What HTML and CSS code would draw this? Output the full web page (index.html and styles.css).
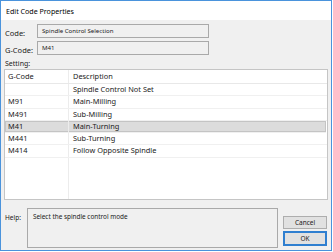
FILE: index.html
```html
<!DOCTYPE html>
<html>
<head>
<meta charset="utf-8">
<link rel="stylesheet" href="styles.css">
</head>
<body>
<div class="window">
  <div class="titlebar">Edit Code Properties</div>
  <div class="content">
    <div class="field-row">
      <span class="label">Code:</span>
      <div class="field">Spindle Control Selection</div>
    </div>
    <div class="field-row">
      <span class="label">G-Code:</span>
      <div class="field">M41</div>
    </div>
    <div class="setting-label">Setting:</div>
    <div class="list">
      <div class="row header"><div class="c1">G-Code</div><div class="c2">Description</div></div>
      <div class="row"><div class="c1"></div><div class="c2">Spindle Control Not Set</div></div>
      <div class="row"><div class="c1">M91</div><div class="c2">Main-Milling</div></div>
      <div class="row"><div class="c1">M491</div><div class="c2">Sub-Milling</div></div>
      <div class="row selected"><div class="c1">M41</div><div class="c2">Main-Turning</div></div>
      <div class="row"><div class="c1">M441</div><div class="c2">Sub-Turning</div></div>
      <div class="row"><div class="c1">M414</div><div class="c2">Follow Opposite Spindle</div></div>
      <div class="row filler"><div class="c1"></div><div class="c2"></div></div>
    </div>
    <div class="bottom">
      <span class="help-label">Help:</span>
      <div class="help">Select the spindle control mode</div>
      <div class="buttons">
        <div class="btn">Cancel</div>
        <div class="btn default">OK</div>
      </div>
    </div>
  </div>
</div>
</body>
</html>
```
FILE: styles.css
```css
* { box-sizing: border-box; }
html, body { margin: 0; padding: 0; background: #ffffff; }
body {
  font-family: "Noto Sans", "Open Sans", sans-serif;
  font-size: 7.5px;
  color: #1a1a1a;
}
.window {
  width: 332px;
  height: 251px;
  border: 1px solid #4a93dc;
  background: #f0f0f0;
  display: flex;
  flex-direction: column;
}
.titlebar {
  height: 19px;
  background: #ffffff;
  padding-left: 5px;
  display: flex;
  align-items: center;
  font-size: 7.1px;
  color: #000;
}
.content {
  flex: 1;
  display: flex;
  flex-direction: column;
  padding: 4px 4px 0 3px;
}
.field-row {
  display: flex;
  align-items: center;
  height: 14px;
  margin-bottom: 3px;
}
.label {
  width: 33px;
  padding-left: 1px;
  padding-top: 3px;
}
.field {
  width: 172px;
  height: 14px;
  border: 1px solid #a9a9a9;
  background: #f0f0f0;
  padding-left: 4px;
  line-height: 11px;
  font-size: 6.1px;
}
.setting-label {
  height: 10px;
  line-height: 10px;
  padding-left: 1px;
  margin-top: 1px;
  font-size: 7px;
}
.list {
  width: 324px;
  height: 131px;
  border: 1px solid #c5c5c5;
  background: #ffffff;
  display: flex;
  flex-direction: column;
  font-size: 7.4px;
}
.row {
  display: flex;
  height: 12.3px;
  border-bottom: 1px solid #f0f0f0;
  line-height: 11px;
}
.row.header {
  height: 14px;
  line-height: 13px;
  border-bottom: 1px solid #e8e8e8;
}
.row.selected {
  background: #dcdcdc;
  box-shadow: inset 0 0 0 1px #c4c4c4;
  margin-right: 1px;
}
.row.filler {
  flex: 1;
  border-bottom: none;
}
.c1 {
  width: 64px;
  padding-left: 3px;
  border-right: 1px solid #ececec;
}
.c2 {
  flex: 1;
  padding-left: 4px;
}
.bottom {
  display: flex;
  margin-top: 8px;
  height: 40px;
}
.help-label {
  width: 23px;
  padding-left: 1px;
  padding-top: 5px;
  font-size: 6.5px;
}
.help {
  width: 251px;
  height: 40px;
  border: 1px solid #a9a9a9;
  background: #f0f0f0;
  padding: 3px 0 0 5px;
  font-size: 6.4px;
}
.buttons {
  display: flex;
  flex-direction: column;
  justify-content: flex-end;
  gap: 2px;
  margin-left: 5px;
  padding-bottom: 2px;
}
.btn {
  width: 44px;
  height: 13px;
  border: 1px solid #adadad;
  background: #e1e1e1;
  display: flex;
  align-items: center;
  justify-content: center;
  font-size: 6.5px;
}
.btn.default {
  height: 15px;
  border: 2px solid #2f7fd0;
}
```
